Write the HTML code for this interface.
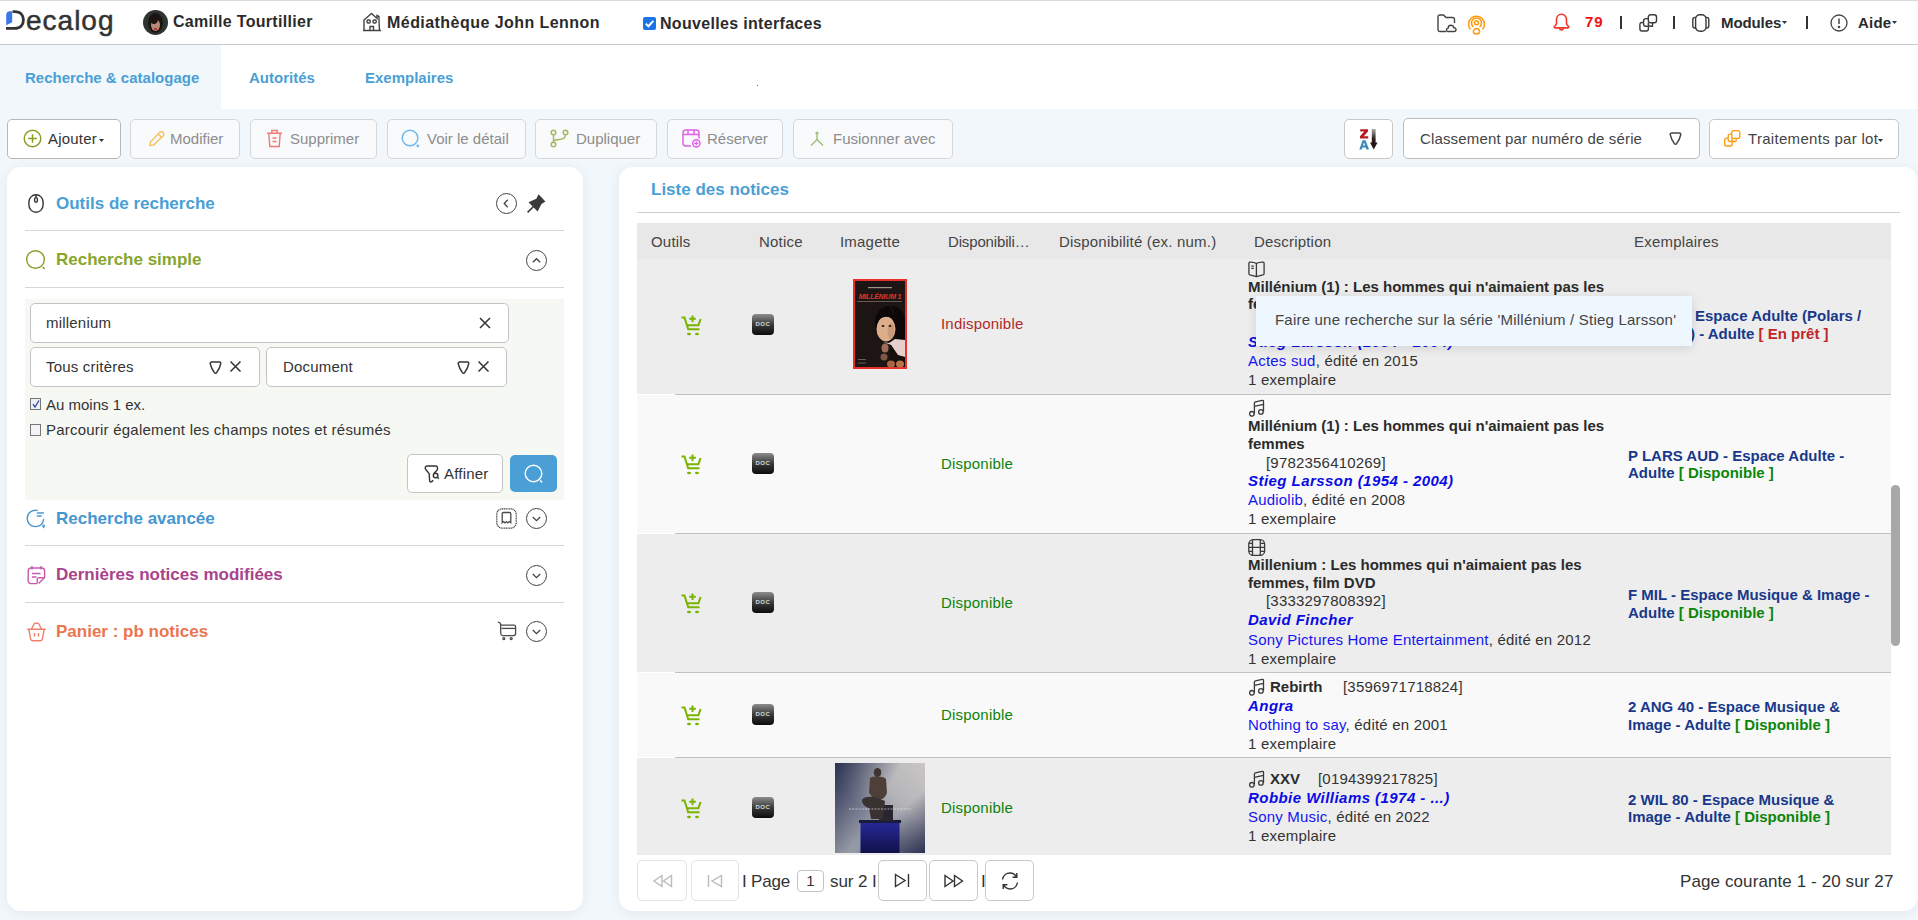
<!DOCTYPE html>
<html lang="fr">
<head>
<meta charset="utf-8">
<title>Decalog</title>
<style>
*{box-sizing:border-box;margin:0;padding:0}
html,body{width:1918px;height:920px;overflow:hidden}
body{position:relative;background:#f2f7fb;font-family:"Liberation Sans",sans-serif;color:#333;font-size:15px;line-height:1}
.a{position:absolute;white-space:nowrap;line-height:1}
svg{position:absolute;overflow:visible}
.b{font-weight:bold}
/* header */
#hdr{position:absolute;left:0;top:0;width:1918px;height:45px;background:#fff;border-top:1px solid #d9d9d9;border-bottom:1px solid #c9c9c9}
.hn{font-weight:bold;font-size:16px;color:#2b2b2b}
/* tabs */
#tabs{position:absolute;left:0;top:45px;width:1918px;height:64px;background:#fff}
#tabact{position:absolute;left:0;top:0;width:221px;height:64px;background:#f2f7fb}
.tab{font-weight:bold;font-size:15px;color:#4a9fd5}
/* toolbar */
.btn{position:absolute;top:119px;height:40px;border:1px solid #d4d7da;border-radius:5px;background:#f8fafc}
.btn.en{background:#fff;border-color:#b8b8b8}
.bt{position:absolute;font-size:15px;color:#8d8d8d;white-space:nowrap;line-height:1}
/* panels */
.panel{position:absolute;background:#fff;border-radius:14px;box-shadow:0 2px 12px rgba(40,70,100,.08)}
.sec{font-weight:bold;font-size:17px}
.hr{position:absolute;height:1px;background:#d7d7d7}
.circ{position:absolute;width:21px;height:21px;border:1.3px solid #444;border-radius:50%}
.th{position:absolute;top:234px;font-size:15px;color:#444;white-space:nowrap;line-height:1;letter-spacing:0.2px}
.row{position:absolute;left:0;width:1254px}
.sep{position:absolute;left:38px;width:1216px;height:1px;background:#c2c2c2}
.doc{position:absolute;width:22px;height:21px;border-radius:4px;background:linear-gradient(#8c8c8c,#3a3a3a 50%,#0c0c0c);color:#d8d8d8;font-size:6px;font-weight:bold;text-align:center;line-height:21px;letter-spacing:0.6px}
.dispo{position:absolute;font-size:15px;color:#0c840c;white-space:nowrap;line-height:1;letter-spacing:0.2px}
.tt{position:absolute;font-size:15px;font-weight:bold;color:#2b2b2b;white-space:nowrap;line-height:1}
.au{position:absolute;font-size:15px;font-weight:bold;font-style:italic;color:#0a0ae6;white-space:nowrap;line-height:1;letter-spacing:0.45px}
.pu{position:absolute;font-size:15px;color:#333;white-space:nowrap;line-height:1;letter-spacing:0.2px}
.lk{color:#1515f2}
.ex{position:absolute;font-size:15px;font-weight:bold;color:#18388a;white-space:nowrap;line-height:1}
.grn{color:#0b860b}
.red{color:#c0252a}
.pb{position:absolute;top:860px;height:41px;border:1px solid #c8c8c8;border-radius:5px;background:#fff}
</style>
</head>
<body>

<!-- ============ HEADER ============ -->
<div id="hdr"></div>
<!-- logo -->
<svg style="left:5px;top:10px" width="20" height="21" viewBox="0 0 20 21">
  <path d="M1.2 5 C1.2 2.8 2.6 1.2 4.6 1.2 L7.2 1.2 L7.2 12.2 L1.2 15.2 Z" fill="#3b78e7"/>
  <path d="M7.5 1.6 H9.8 C15.4 1.6 18.4 5.2 18.4 10 C18.4 14.8 15.4 18.4 9.8 18.4 H1" fill="none" stroke="#333" stroke-width="2.8"/>
</svg>
<div class="a" style="left:26px;top:7px;font-size:28px;color:#333;letter-spacing:1px;-webkit-text-stroke:0.5px #333">ecalog</div>

<!-- avatar -->
<div class="a" style="left:143px;top:10px;width:25px;height:25px;border-radius:50%;overflow:hidden;background:#2e3430">
  <div style="position:absolute;left:5px;top:3px;width:15px;height:20px;border-radius:50%;background:#1a1412"></div>
  <div style="position:absolute;left:8px;top:9px;width:9px;height:12px;border-radius:50%;background:#b88878"></div>
  <div style="position:absolute;left:7px;top:5px;width:8px;height:9px;border-radius:50%;background:#1a1412"></div>
  <div style="position:absolute;left:11px;top:18px;width:3px;height:1.5px;background:#c03040"></div>
</div>
<div class="a hn" style="left:173px;top:14px;letter-spacing:0.3px">Camille Tourtillier</div>

<!-- house -->
<svg style="left:362px;top:12px" width="20" height="20" viewBox="0 0 20 20" fill="none" stroke="#444" stroke-width="1.4">
  <path d="M1 18.5 H19 M2 18.5 V8 L9.5 1.5 L15 6.5 V3.5 L17 4.5 V9 L17.5 18.5"/>
  <rect x="5" y="8" width="3.2" height="3" rx="1"/><rect x="11" y="8" width="3.2" height="3" rx="1"/>
  <path d="M8 18.5 V14.5 H11.5 V18.5"/>
</svg>
<div class="a hn" style="left:387px;top:15px;letter-spacing:0.45px">Médiathèque John Lennon</div>

<!-- checkbox -->
<div class="a" style="left:643px;top:17px;width:13px;height:13px;border-radius:2px;background:#1a73e8"></div>
<svg style="left:643px;top:17px" width="13" height="13" viewBox="0 0 13 13"><path d="M2.8 6.7 L5.4 9.2 L10.3 3.8" fill="none" stroke="#fff" stroke-width="2"/></svg>
<div class="a hn" style="left:660px;top:16px;letter-spacing:0.32px">Nouvelles interfaces</div>

<!-- right header icons -->
<svg style="left:1437px;top:14px" width="20" height="19" viewBox="0 0 20 19" fill="none" stroke="#444" stroke-width="1.4">
  <path d="M9 17.5 H3 C1.8 17.5 1 16.7 1 15.5 V3 C1 1.8 1.8 1 3 1 H6.5 L9 3.5 H15.5 C16.7 3.5 17.5 4.3 17.5 5.5 V9"/>
  <path d="M10.5 17.5 H17 C18.3 17.5 19 16.6 19 15.6 C19 14.5 18 13.6 16.9 13.8 C16.5 12.2 15.3 11.3 14 11.3 C12.4 11.3 11.2 12.6 11.2 14 C10.2 14 9.5 14.8 9.5 15.8 C9.5 16.8 10.2 17.5 10.5 17.5 Z"/>
</svg>
<svg style="left:1467px;top:15px" width="19" height="20" viewBox="0 0 19 20" fill="none" stroke="#fb9a0e" stroke-width="1.5">
  <circle cx="9.5" cy="7.8" r="2"/>
  <path d="M6.4 11.8 A5 5 0 1 1 12.6 11.8"/>
  <path d="M3.6 14.6 A8 8 0 1 1 15.4 14.6"/>
  <path d="M9.5 13.4 C7.6 13.4 6.4 15 6.4 16.8 C6.4 18.4 7.8 19 9.5 19 C11.2 19 12.6 18.4 12.6 16.8 C12.6 15 11.4 13.4 9.5 13.4 Z"/>
</svg>
<svg style="left:1553px;top:13px" width="17" height="19" viewBox="0 0 17 19" fill="none" stroke="#f23a2c" stroke-width="1.6" stroke-linejoin="round">
  <path d="M8.5 1.2 C5.3 1.2 3.5 3.8 3.5 7 V10.4 C3.5 11.8 2.5 12.6 1.5 13.4 C0.9 13.9 1.2 14.9 2 14.9 H15 C15.8 14.9 16.1 13.9 15.5 13.4 C14.5 12.6 13.5 11.8 13.5 10.4 V7 C13.5 3.8 11.7 1.2 8.5 1.2 Z"/>
  <path d="M6.6 15.3 C6.9 17.4 10.1 17.4 10.4 15.3" stroke-linecap="round"/>
</svg>
<div class="a b" style="left:1585px;top:14px;font-size:15px;color:#ee1111;letter-spacing:0.8px">79</div>
<div class="a" style="left:1620px;top:16px;width:2px;height:13px;background:#333"></div>
<svg style="left:1639px;top:14px" width="19" height="18" viewBox="0 0 19 18" fill="none" stroke="#3a3a3a" stroke-width="1.4" stroke-linejoin="round">
  <rect x="9.3" y="0.8" width="8.2" height="8" rx="2.2"/>
  <path d="M9.3 4.6 H7 C5.4 4.6 4.6 5.5 4.6 7 V8.5 M9.3 8.8 V10 C9.3 11.4 10.2 12.2 11.6 12.2 H13.5 V8.8"/>
  <path d="M4.6 8.5 H3 C1.6 8.5 0.9 9.3 0.9 10.7 V14.8 C0.9 16.2 1.7 17 3 17 H7.2 C8.6 17 9.4 16.2 9.4 14.8 V12.2"/>
  <path d="M4.6 8.5 V10 C4.6 11.4 5.4 12.2 6.8 12.2 H9.4"/>
</svg>
<div class="a" style="left:1673px;top:16px;width:2px;height:13px;background:#333"></div>
<svg style="left:1692px;top:14px" width="19" height="18" viewBox="0 0 19 18" fill="none" stroke="#3a3a3a" stroke-width="1.4">
  <rect x="3.6" y="0.8" width="10.4" height="16.4" rx="4.2"/>
  <path d="M3.6 3.4 H2.9 C1.6 3.4 0.8 4.3 0.8 5.6 V11.8 C0.8 13.1 1.6 14 2.9 14 H3.6"/>
  <path d="M14 3.4 H14.7 C16 3.4 16.8 4.3 16.8 5.6 V11.8 C16.8 13.1 16 14 14.7 14 H14"/>
</svg>
<div class="a hn" style="left:1721px;top:15px;font-size:15px;letter-spacing:-0.1px">Modules</div>
<svg style="left:1782px;top:21px" width="5" height="3" viewBox="0 0 5 3"><path d="M0 0 H5 L2.5 3 Z" fill="#333"/></svg>
<div class="a" style="left:1806px;top:16px;width:2px;height:13px;background:#333"></div>
<svg style="left:1830px;top:14px" width="18" height="18" viewBox="0 0 18 18" fill="none" stroke="#444" stroke-width="1.3">
  <circle cx="9" cy="9" r="8"/>
  <path d="M9 4.5 V10" stroke-width="1.5"/><circle cx="9" cy="13" r=".6" fill="#444"/>
</svg>
<div class="a hn" style="left:1858px;top:15px;font-size:15px;letter-spacing:0.2px">Aide</div>
<svg style="left:1892px;top:21px" width="5" height="3" viewBox="0 0 5 3"><path d="M0 0 H5 L2.5 3 Z" fill="#333"/></svg>

<!-- ============ TABS ============ -->
<div id="tabs"><div id="tabact"></div></div>
<div class="a tab" style="left:25px;top:70px">Recherche &amp; catalogage</div>
<div class="a tab" style="left:249px;top:70px">Autorités</div>
<div class="a tab" style="left:365px;top:70px">Exemplaires</div>
<div class="a" style="left:757px;top:85px;width:1px;height:1px;background:#e33"></div>

<!-- ============ TOOLBAR ============ -->
<div class="btn en" style="left:7px;width:114px"></div>
<svg style="left:23px;top:129px" width="19" height="19" viewBox="0 0 19 19" fill="none" stroke="#8a9a1e" stroke-width="1.4">
  <circle cx="9.5" cy="9.5" r="8.3"/><path d="M9.5 5.2 V13.8 M5.2 9.5 H13.8"/>
</svg>
<div class="bt" style="left:48px;top:131px;color:#333;letter-spacing:0.2px">Ajouter</div>
<svg style="left:99px;top:139px" width="5" height="3" viewBox="0 0 5 3"><path d="M0 0 H5 L2.5 3 Z" fill="#333"/></svg>

<div class="btn" style="left:130px;width:110px"></div>
<svg style="left:148px;top:130px" width="17" height="17" viewBox="0 0 17 17" fill="none" stroke="#f5c25a" stroke-width="1.4">
  <path d="M2 15.5 L2.4 12 L11.5 2.6 C12.6 1.5 14.3 1.5 15.2 2.5 C16.1 3.4 16 5 15 6 L5.7 15 Z"/><path d="M10.3 4 L13.8 7.4"/>
</svg>
<div class="bt" style="left:170px;top:131px">Modifier</div>

<div class="btn" style="left:250px;width:127px"></div>
<svg style="left:266px;top:129px" width="17" height="19" viewBox="0 0 17 19" fill="none" stroke="#f07b73" stroke-width="1.4">
  <path d="M1 4.2 H16 M5.8 4 V1.5 H11.2 V4 M2.8 4.5 L3.8 17.5 H13.2 L14.2 4.5 M6.5 9 H10.5 M6.5 12.5 H10.5"/>
</svg>
<div class="bt" style="left:290px;top:131px">Supprimer</div>

<div class="btn" style="left:387px;width:139px"></div>
<svg style="left:401px;top:129px" width="20" height="20" viewBox="0 0 20 20" fill="none" stroke="#6fb9f0" stroke-width="1.5">
  <circle cx="9" cy="9" r="7.8"/><circle cx="16.8" cy="16.8" r="1.4" fill="#6fb9f0" stroke="none"/>
</svg>
<div class="bt" style="left:427px;top:131px">Voir le détail</div>

<div class="btn" style="left:535px;width:122px"></div>
<svg style="left:550px;top:129px" width="19" height="19" viewBox="0 0 19 19" fill="none" stroke="#a8b760" stroke-width="1.5">
  <circle cx="3.5" cy="3.5" r="2.3"/><circle cx="3.5" cy="15.5" r="2.3"/><circle cx="15.5" cy="3.5" r="2.3"/>
  <path d="M3.5 5.8 V13.2 M15.5 5.8 C15.5 9.5 13 10.5 9 10.5 C6 10.5 3.5 11 3.5 13.2"/>
</svg>
<div class="bt" style="left:576px;top:131px">Dupliquer</div>

<div class="btn" style="left:667px;width:116px"></div>
<svg style="left:682px;top:129px" width="19" height="19" viewBox="0 0 19 19" fill="none" stroke="#e060e8" stroke-width="1.5">
  <path d="M9 17 H4 C2.3 17 1 15.7 1 14 V4 C1 2.3 2.3 1 4 1 H14 C15.7 1 17 2.3 17 4 V9.5"/>
  <path d="M1 5.5 H17 M6 1 V5.5 M12 1 V5.5"/>
  <circle cx="14.3" cy="14.3" r="3.6"/><path d="M14.3 12.3 V16.3 M12.3 14.3 H16.3" stroke-width="1.2"/>
</svg>
<div class="bt" style="left:707px;top:131px">Réserver</div>

<div class="btn" style="left:793px;width:160px"></div>
<svg style="left:809px;top:130px" width="16" height="17" viewBox="0 0 16 17" fill="none" stroke="#9cc070" stroke-width="1.4">
  <path d="M8 2 V9.5 L2 15.5 M8 9.5 L14 15.5"/><path d="M5.6 3.8 L8 1.2 L10.4 3.8 Z" fill="#9cc070" stroke="none"/>
</svg>
<div class="bt" style="left:833px;top:131px">Fusionner avec</div>

<!-- right toolbar -->
<div class="btn en" style="left:1344px;width:49px;border-color:#c8c8c8"></div>
<svg style="left:1359px;top:128px" width="21" height="23" viewBox="0 0 21 23">
  <defs><linearGradient id="shaft" x1="0" y1="0" x2="0" y2="1"><stop offset="0" stop-color="#aaa"/><stop offset="0.7" stop-color="#2a1a1a"/></linearGradient></defs>
  <path d="M1.2 1.2 H9 V3.4 L4.8 8.2 H9.2 V10.4 H1 V8.2 L5.2 3.4 H1.2 Z" fill="#b81c22"/>
  <path d="M3.6 12.2 H6.6 L10 21.5 H7.3 L6.7 19.6 H3.4 L2.8 21.5 H0.3 Z M4 17.6 H6.1 L5.05 14.2 Z" fill="#3b8ab8"/>
  <rect x="12.8" y="1" width="3.8" height="14.5" fill="url(#shaft)"/>
  <path d="M11 14.6 H18.6 L14.7 21.6 Z" fill="#221414"/>
</svg>
<div class="btn en" style="left:1403px;top:118px;width:297px;height:41px;border-color:#bdbdbd"></div>
<div class="bt" style="left:1420px;top:131px;color:#444;letter-spacing:0.15px">Classement par numéro de série</div>
<svg style="left:1669px;top:132px" width="13" height="14" viewBox="0 0 13 14" fill="none" stroke="#444" stroke-width="1.5">
  <path d="M1.3 2.8 C1 1.7 1.7 1 2.8 1 H10.2 C11.3 1 12 1.7 11.7 2.8 C11.1 5.6 9.2 9.4 7.6 11.6 C7.1 12.4 5.9 12.4 5.4 11.6 C3.8 9.4 1.9 5.6 1.3 2.8 Z"/>
</svg>

<div class="btn en" style="left:1709px;width:190px;border-color:#c8c8c8"></div>
<svg style="left:1724px;top:130px" width="17" height="17" viewBox="0 0 17 17" fill="none" stroke="#fb9a0e" stroke-width="1.3" stroke-linejoin="round">
  <rect x="7.8" y="0.6" width="8" height="7.8" rx="2"/>
  <path d="M7.8 4.2 H6.2 C4.9 4.2 4.2 4.9 4.2 6.2 V8.2 M7.8 8.4 C7.8 9.8 8.5 11.5 9.8 11.5 H11.2 C11.9 11.5 12.2 11 12.2 10.2 V8.4"/>
  <path d="M4.2 8.2 H2.6 C1.3 8.2 0.6 8.9 0.6 10.2 V14 C0.6 15.3 1.3 16 2.6 16 H6.2 C7.5 16 8.2 15.3 8.2 14 V11.5"/>
  <path d="M4.2 8.2 V9.5 C4.2 10.8 4.9 11.5 6.2 11.5 H8.2"/>
</svg>
<div class="bt" style="left:1748px;top:131px;color:#444;letter-spacing:0.3px">Traitements par lot</div>
<svg style="left:1878px;top:139px" width="5" height="3" viewBox="0 0 5 3"><path d="M0 0 H5 L2.5 3 Z" fill="#333"/></svg>

<!-- ============ LEFT PANEL ============ -->
<div class="panel" style="left:7px;top:167px;width:576px;height:744px"></div>
<svg style="left:28px;top:194px" width="16" height="19" viewBox="0 0 16 19" fill="none" stroke="#333" stroke-width="1.4">
  <rect x="0.9" y="0.8" width="14.2" height="17.4" rx="7.1"/><rect x="6.6" y="3.6" width="2.8" height="4.6" rx="1.4"/><path d="M8 0.8 V3.6"/>
</svg>
<div class="a sec" style="left:56px;top:195px;color:#4a9fd5">Outils de recherche</div>
<div class="circ" style="left:496px;top:193px"></div>
<svg style="left:496px;top:193px" width="21" height="21" viewBox="0 0 21 21" fill="none" stroke="#444" stroke-width="1.3"><path d="M11.8 6.8 L8.2 10.5 L11.8 14.2"/></svg>
<svg style="left:527px;top:194px" width="19" height="19" viewBox="0 0 19 19">
  <path d="M0.6 18.4 L6.4 12.6" stroke="#3a3a3a" stroke-width="1.5"/>
  <path d="M11.6 0.2 L18.4 7.4 L14.5 10 L10.6 17.5 L1.5 8.3 L9.3 4.8 Z" fill="#3a3a3a"/>
</svg>
<div class="hr" style="left:25px;top:230px;width:539px"></div>

<svg style="left:26px;top:250px" width="21" height="21" viewBox="0 0 21 21" fill="none" stroke="#8c9a26" stroke-width="1.4">
  <circle cx="9.5" cy="9.5" r="8.8"/><path d="M16.6 17 L18.6 19"/>
</svg>
<div class="a sec" style="left:56px;top:251px;color:#88a62e">Recherche simple</div>
<div class="circ" style="left:526px;top:250px"></div>
<svg style="left:526px;top:250px" width="21" height="21" viewBox="0 0 21 21" fill="none" stroke="#444" stroke-width="1.3"><path d="M6.8 12.3 L10.5 8.7 L14.2 12.3"/></svg>
<div class="hr" style="left:25px;top:287px;width:539px"></div>

<!-- search box -->
<div class="a" style="left:25px;top:299px;width:539px;height:201px;background:#f6f9f3"></div>
<div class="a" style="left:30px;top:303px;width:479px;height:40px;background:#fff;border:1px solid #c4c4c4;border-radius:5px"></div>
<div class="a" style="left:46px;top:315px;font-size:15px;color:#333;letter-spacing:0.2px">millenium</div>
<svg style="left:479px;top:317px" width="12" height="12" viewBox="0 0 12 12" stroke="#333" stroke-width="1.5"><path d="M1 1 L11 11 M11 1 L1 11"/></svg>

<div class="a" style="left:30px;top:347px;width:230px;height:40px;background:#fff;border:1px solid #c4c4c4;border-radius:5px"></div>
<div class="a" style="left:46px;top:359px;font-size:15px;color:#333;letter-spacing:0.2px">Tous critères</div>
<svg style="left:209px;top:361px" width="13" height="14" viewBox="0 0 13 14" fill="none" stroke="#333" stroke-width="1.5"><path d="M1.3 2.8 C1 1.7 1.7 1 2.8 1 H10.2 C11.3 1 12 1.7 11.7 2.8 C11.1 5.6 9.2 9.4 7.6 11.6 C7.1 12.4 5.9 12.4 5.4 11.6 C3.8 9.4 1.9 5.6 1.3 2.8 Z"/></svg>
<svg style="left:230px;top:361px" width="11" height="11" viewBox="0 0 11 11" stroke="#333" stroke-width="1.5"><path d="M.5 .5 L10.5 10.5 M10.5 .5 L.5 10.5"/></svg>

<div class="a" style="left:266px;top:347px;width:241px;height:40px;background:#fff;border:1px solid #c4c4c4;border-radius:5px"></div>
<div class="a" style="left:283px;top:359px;font-size:15px;color:#333;letter-spacing:0.2px">Document</div>
<svg style="left:457px;top:361px" width="13" height="14" viewBox="0 0 13 14" fill="none" stroke="#333" stroke-width="1.5"><path d="M1.3 2.8 C1 1.7 1.7 1 2.8 1 H10.2 C11.3 1 12 1.7 11.7 2.8 C11.1 5.6 9.2 9.4 7.6 11.6 C7.1 12.4 5.9 12.4 5.4 11.6 C3.8 9.4 1.9 5.6 1.3 2.8 Z"/></svg>
<svg style="left:478px;top:361px" width="11" height="11" viewBox="0 0 11 11" stroke="#333" stroke-width="1.5"><path d="M.5 .5 L10.5 10.5 M10.5 .5 L.5 10.5"/></svg>

<div class="a" style="left:30px;top:398px;width:11px;height:12px;border:1px solid #777;background:#eef0f6"></div>
<svg style="left:31px;top:399px" width="10" height="10" viewBox="0 0 10 10"><path d="M2 5.2 L4 8 L8 1.5" fill="none" stroke="#3848a8" stroke-width="1.4"/></svg>
<div class="a" style="left:46px;top:397px;font-size:15px;color:#333">Au moins 1 ex.</div>
<div class="a" style="left:30px;top:424px;width:11px;height:12px;border:1px solid #777;background:#f4f4f4"></div>
<div class="a" style="left:46px;top:422px;font-size:15px;color:#333;letter-spacing:0.22px">Parcourir également les champs notes et résumés</div>

<div class="a" style="left:407px;top:454px;width:96px;height:39px;background:#fff;border:1px solid #c4c4c4;border-radius:5px"></div>
<svg style="left:424px;top:465px" width="19" height="19" viewBox="0 0 19 19" fill="none" stroke="#333" stroke-width="1.4" stroke-linejoin="round">
  <path d="M10 8.2 L12.8 5.6 C14 4.4 13.8 1 12 1 H3 C1.2 1 0.7 3.2 1.8 4.5 L5.2 8.6 L5.6 15.6 C5.7 16.8 6.6 17.3 7.6 16.6 L9.3 15.4"/>
  <circle cx="11.6" cy="10.5" r="2.3"/><path d="M13.3 12.3 L14.8 13.8"/>
</svg>
<div class="a" style="left:444px;top:466px;font-size:15px;color:#333;letter-spacing:0.2px">Affiner</div>
<div class="a" style="left:510px;top:455px;width:47px;height:37px;background:#4aa0d6;border-radius:5px"></div>
<svg style="left:524px;top:464px" width="21" height="21" viewBox="0 0 21 21" fill="none" stroke="#fff" stroke-width="1.4">
  <circle cx="9.5" cy="9.5" r="8.3"/><path d="M16 16.3 L18.2 18.5"/>
</svg>

<!-- other sections -->
<svg style="left:26px;top:509px" width="20" height="19" viewBox="0 0 20 19" fill="none" stroke="#4596d0" stroke-width="1.4" stroke-linecap="round">
  <path d="M17.6 10.5 C17.2 14.8 13.6 17.6 9.4 17.6 C4.8 17.6 1.2 14 1.2 9.4 C1.2 4.8 4.8 1.2 9.4 1.2 C10 1.2 10.6 1.3 11.2 1.4"/>
  <path d="M11.4 4 H17.4 M11.4 7 H15.2"/>
  <path d="M18.4 16.8 C18.4 17.8 17.6 18.6 17.6 18.6 C17.6 18.6 16.8 17.8 16.8 16.8 C16.8 16.3 17.2 16 17.6 16 C18 16 18.4 16.3 18.4 16.8 Z" stroke-width="1.1"/>
</svg>
<div class="a sec" style="left:56px;top:510px;color:#4596d0">Recherche avancée</div>
<svg style="left:496px;top:508px" width="21" height="21" viewBox="0 0 21 21" fill="none" stroke="#4a4a4a" stroke-width="1.2">
  <rect x="0.8" y="0.8" width="19.4" height="19.4" rx="5.5" stroke-dasharray="1.2 0.5"/>
  <path d="M6.2 5.8 C6.2 5 6.7 4.5 7.5 4.5 H13.5 C14.3 4.5 14.8 5 14.8 5.8 V14.8 L13.2 13.6 L11.8 14.9 L10.4 13.6 L9 14.9 L7.6 13.6 L6.2 14.8 Z" stroke-width="1.3"/>
</svg>
<div class="circ" style="left:526px;top:508px"></div>
<svg style="left:526px;top:508px" width="21" height="21" viewBox="0 0 21 21" fill="none" stroke="#444" stroke-width="1.3"><path d="M6.8 9 L10.5 12.6 L14.2 9"/></svg>
<div class="hr" style="left:25px;top:545px;width:539px"></div>

<svg style="left:27px;top:565px" width="19" height="20" viewBox="0 0 19 20" fill="none" stroke="#c55ab0" stroke-width="1.4">
  <path d="M10 18.6 H4 C2.3 18.6 1.2 17.4 1.2 15.8 V6 C1.2 4.3 2.4 3 4 3 H14.8 C16.5 3 17.6 4.3 17.6 6 V12.5 L11.6 18.6"/>
  <path d="M5 1 V4.5 M14 1 V4.5 M5 8.5 H13.5 M5 12 H9.5 M10.2 18.5 V14.8 C10.2 13.6 11 12.8 12.2 12.8 H17.5"/>
</svg>
<div class="a sec" style="left:56px;top:566px;color:#a8438c">Dernières notices modifiées</div>
<div class="circ" style="left:526px;top:565px"></div>
<svg style="left:526px;top:565px" width="21" height="21" viewBox="0 0 21 21" fill="none" stroke="#444" stroke-width="1.3"><path d="M6.8 9 L10.5 12.6 L14.2 9"/></svg>
<div class="hr" style="left:25px;top:602px;width:539px"></div>

<svg style="left:26px;top:622px" width="21" height="20" viewBox="0 0 21 20" fill="none" stroke="#f0806a" stroke-width="1.4">
  <path d="M1.2 7.2 H19.8 M2.8 7.2 L4.6 16.8 C4.8 18 5.8 18.8 7 18.8 H14 C15.2 18.8 16.2 18 16.4 16.8 L18.2 7.2"/>
  <path d="M5.5 7 L8.5 1.2 M15.5 7 L12.5 1.2 M8.5 1.2 H12.5 M8.5 11 V14.5 M12.5 11 V14.5"/>
</svg>
<div class="a sec" style="left:56px;top:623px;color:#e9764f">Panier : pb notices</div>
<svg style="left:497px;top:621px" width="20" height="20" viewBox="0 0 20 20" fill="none" stroke="#4a4a4a" stroke-width="1.3" stroke-linejoin="round">
  <path d="M0.8 1.2 C2 1.2 3 1.6 3.4 2.6 L3.8 4.2"/>
  <path d="M3.6 4.2 H17 C18 4.2 18.6 4.8 18.6 5.8 V12.6 C18.6 13.8 17.8 14.6 16.6 14.6 H5.6 C4.6 14.6 3.9 13.9 3.8 12.8 Z"/>
  <path d="M4.6 7.4 H18.4"/>
  <circle cx="6.8" cy="17.6" r="1"/><circle cx="14.2" cy="17.6" r="1"/>
</svg>
<div class="circ" style="left:526px;top:621px"></div>
<svg style="left:526px;top:621px" width="21" height="21" viewBox="0 0 21 21" fill="none" stroke="#444" stroke-width="1.3"><path d="M6.8 9 L10.5 12.6 L14.2 9"/></svg>

<!-- ============ RIGHT PANEL ============ -->
<div class="panel" style="left:619px;top:167px;width:1299px;height:744px"></div>
<div class="a sec" style="left:651px;top:181px;color:#4a9fd5">Liste des notices</div>
<div class="hr" style="left:637px;top:212px;width:1263px;height:1px;background:#cdcdcd"></div>

<!-- table header -->
<div class="a" style="left:637px;top:223px;width:1254px;height:36px;background:#e8e8e8"></div>
<div class="th" style="left:651px">Outils</div>
<div class="th" style="left:759px">Notice</div>
<div class="th" style="left:840px">Imagette</div>
<div class="th" style="left:948px;letter-spacing:-0.15px">Disponibili…</div>
<div class="th" style="left:1059px">Disponibilité (ex. num.)</div>
<div class="th" style="left:1254px">Description</div>
<div class="th" style="left:1634px">Exemplaires</div>

<!-- table body -->
<div id="tb" style="position:absolute;left:637px;top:259px;width:1254px;height:596px;overflow:hidden">
  <div class="row" style="top:0;height:135px;background:#ededed"></div>
  <div class="sep" style="top:135px"></div>
  <div class="row" style="top:136px;height:138px;background:#f9f9f9"></div>
  <div class="sep" style="top:274px"></div>
  <div class="row" style="top:275px;height:138px;background:#ededed"></div>
  <div class="sep" style="top:413px"></div>
  <div class="row" style="top:414px;height:84px;background:#f9f9f9"></div>
  <div class="sep" style="top:498px"></div>
  <div class="row" style="top:499px;height:110px;background:#ededed"></div>
</div>
<div class="a" style="left:1891px;top:485px;width:9px;height:161px;border-radius:5px;background:#a8a8a8"></div>

<!-- ===== ROW 1 ===== -->
<svg class="cart" style="left:681px;top:315px" width="20" height="20" viewBox="0 0 20 20"><use href="#cartp"/></svg>
<div class="doc" style="left:752px;top:314px">DOC</div>
<svg style="left:853px;top:279px" width="54" height="90" viewBox="0 0 54 90">
  <rect width="54" height="90" fill="#e8302a"/>
  <rect x="2" y="2" width="50" height="86" fill="#1d1513"/>
  <rect x="15" y="8" width="24" height="1.2" fill="#a0948e"/>
  <text x="27" y="19.6" text-anchor="middle" font-family="Liberation Sans" font-weight="bold" font-style="italic" font-size="7" fill="#e0352a" letter-spacing="-0.2">MILLÉNIUM 1</text>
  <rect x="4" y="22" width="45" height="0.8" fill="#7a6e68"/>
  <path d="M22 46 C21 34 28 27 37 27 C46 27 52 33 52 42 V68 H40 L26 60 Z" fill="#0c0807"/>
  <path d="M37 27 C40 30 41 34 40 38" stroke="#3a2a24" stroke-width="0.6" fill="none"/>
  <ellipse cx="33" cy="50" rx="9.5" ry="12.5" fill="#dcae8c"/>
  <path d="M23.5 44 C25 36 31 34 38 35 C42 36 44 39 44 42 C42 38 36 37 31 38 C27 39 24 42 23.5 44 Z" fill="#0c0807"/>
  <ellipse cx="38" cy="52" rx="3.5" ry="8" fill="#b88468" opacity="0.5"/>
  <ellipse cx="30" cy="47" rx="1.4" ry="0.9" fill="#2a1a14"/><ellipse cx="37" cy="47" rx="1.4" ry="0.9" fill="#2a1a14"/>
  <path d="M30 63 L36 64 L42 60 L52 61 V78 L45 76 L38 66 Z" fill="#e6cfcc"/>
  <path d="M38 66 L45 77 L52 78 V88 H36 Z" fill="#140e0c"/>
  <ellipse cx="32" cy="69" rx="3.5" ry="4.5" fill="#a06c5a"/>
  <ellipse cx="31" cy="78" rx="3.5" ry="3.5" fill="#7e5648"/>
  <ellipse cx="38" cy="85" rx="4" ry="3.5" fill="#a86648"/>
  <ellipse cx="47" cy="85" rx="4" ry="3.5" fill="#b87450"/>
  <rect x="5" y="80" width="8" height="1" fill="#6a605a"/><rect x="5" y="83.5" width="8" height="1" fill="#6a605a"/>
</svg>
<div class="dispo" style="left:941px;top:316px;color:#b02a2a">Indisponible</div>

<svg style="left:1248px;top:261px" width="18" height="17" viewBox="0 0 18 17" fill="none" stroke="#3a3a3a" stroke-width="1.3" stroke-linejoin="round">
  <path d="M8.4 2.6 C7 1.5 4.6 1 1.9 1.1 Q0.9 1.2 0.9 2.3 V12.4 Q0.9 13.4 1.9 13.8 L8.4 15.7 L14.9 13.8 Q16.1 13.4 16.1 12.4 V2.3 Q16.1 1.2 15.1 1.1 C12.4 1 9.8 1.5 8.4 2.6 Z M8.4 2.6 V15.7"/>
  <path d="M3.3 5.1 H5.8 M3.3 7.4 H5.8" stroke-width="1.4"/>
</svg>
<div class="tt" style="left:1248px;top:279px">Millénium (1) : Les hommes qui n'aimaient pas les</div>
<div class="tt" style="left:1248px;top:296px">femmes</div>
<div class="au" style="left:1248px;top:334px">Stieg Larsson (1954 - 2004)</div>
<div class="pu" style="left:1248px;top:353px"><span class="lk">Actes sud</span>, édité en 2015</div>
<div class="pu" style="left:1248px;top:372px">1 exemplaire</div>
<div class="ex" style="left:1695px;top:308px">Espace Adulte (Polars /</div>
<div class="ex" style="left:1690px;top:326px">) - Adulte <span class="red">[ En prêt ]</span></div>

<!-- ===== ROW 2 ===== -->
<svg class="cart" style="left:681px;top:454px" width="20" height="20" viewBox="0 0 20 20"><use href="#cartp"/></svg>
<div class="doc" style="left:752px;top:453px">DOC</div>
<div class="dispo" style="left:941px;top:456px">Disponible</div>
<svg style="left:1249px;top:400px" width="16" height="17" viewBox="0 0 16 17" fill="none" stroke="#3a3a3a" stroke-width="1.3"><use href="#music"/></svg>
<div class="tt" style="left:1248px;top:418px">Millénium (1) : Les hommes qui n'aimaient pas les</div>
<div class="tt" style="left:1248px;top:436px">femmes</div>
<div class="pu" style="left:1266px;top:455px">[9782356410269]</div>
<div class="au" style="left:1248px;top:473px">Stieg Larsson (1954 - 2004)</div>
<div class="pu" style="left:1248px;top:492px"><span class="lk">Audiolib</span>, édité en 2008</div>
<div class="pu" style="left:1248px;top:511px">1 exemplaire</div>
<div class="ex" style="left:1628px;top:448px">P LARS AUD - Espace Adulte -</div>
<div class="ex" style="left:1628px;top:465px">Adulte <span class="grn">[ Disponible ]</span></div>

<!-- ===== ROW 3 ===== -->
<svg class="cart" style="left:681px;top:593px" width="20" height="20" viewBox="0 0 20 20"><use href="#cartp"/></svg>
<div class="doc" style="left:752px;top:592px">DOC</div>
<div class="dispo" style="left:941px;top:595px">Disponible</div>
<svg style="left:1248px;top:539px" width="17" height="17" viewBox="0 0 17 17" fill="none" stroke="#3a3a3a" stroke-width="1.3">
  <rect x="0.8" y="0.6" width="15.8" height="15.8" rx="4.5"/><path d="M4.5 0.6 V16.4 M12.3 0.6 V16.4 M0.8 8.4 H16.6 M0.8 4.4 H4.5 M12.3 4.4 H16.6 M0.8 12.3 H4.5 M12.3 12.3 H16.6"/>
</svg>
<div class="tt" style="left:1248px;top:557px">Millenium : Les hommes qui n'aimaient pas les</div>
<div class="tt" style="left:1248px;top:575px">femmes, film DVD</div>
<div class="pu" style="left:1266px;top:593px">[3333297808392]</div>
<div class="au" style="left:1248px;top:612px">David Fincher</div>
<div class="pu" style="left:1248px;top:632px"><span class="lk">Sony Pictures Home Entertainment</span>, édité en 2012</div>
<div class="pu" style="left:1248px;top:651px">1 exemplaire</div>
<div class="ex" style="left:1628px;top:587px">F MIL - Espace Musique &amp; Image -</div>
<div class="ex" style="left:1628px;top:605px">Adulte <span class="grn">[ Disponible ]</span></div>

<!-- ===== ROW 4 ===== -->
<svg class="cart" style="left:681px;top:705px" width="20" height="20" viewBox="0 0 20 20"><use href="#cartp"/></svg>
<div class="doc" style="left:752px;top:704px">DOC</div>
<div class="dispo" style="left:941px;top:707px">Disponible</div>
<svg style="left:1249px;top:679px" width="16" height="17" viewBox="0 0 16 17" fill="none" stroke="#3a3a3a" stroke-width="1.3"><use href="#music"/></svg>
<div class="tt" style="left:1270px;top:679px">Rebirth</div>
<div class="pu" style="left:1343px;top:679px">[3596971718824]</div>
<div class="au" style="left:1248px;top:698px">Angra</div>
<div class="pu" style="left:1248px;top:717px"><span class="lk">Nothing to say</span>, édité en 2001</div>
<div class="pu" style="left:1248px;top:736px">1 exemplaire</div>
<div class="ex" style="left:1628px;top:699px">2 ANG 40 - Espace Musique &amp;</div>
<div class="ex" style="left:1628px;top:717px">Image - Adulte <span class="grn">[ Disponible ]</span></div>

<!-- ===== ROW 5 ===== -->
<svg class="cart" style="left:681px;top:798px" width="20" height="20" viewBox="0 0 20 20"><use href="#cartp"/></svg>
<div class="doc" style="left:752px;top:797px">DOC</div>
<svg style="left:835px;top:763px" width="90" height="90" viewBox="0 0 90 90">
  <defs>
    <linearGradient id="rwbg" x1="1" y1="0" x2="0" y2="1">
      <stop offset="0" stop-color="#c9c6c4"/><stop offset="0.35" stop-color="#b4b4b8"/><stop offset="0.6" stop-color="#8a90a0"/><stop offset="1" stop-color="#9a9ea8"/>
    </linearGradient>
    <linearGradient id="rwl" x1="0" y1="0" x2="1" y2="0.6">
      <stop offset="0" stop-color="#2a3050" stop-opacity="1"/><stop offset="0.55" stop-color="#2a3050" stop-opacity="0"/>
    </linearGradient>
    <linearGradient id="rwr" x1="1" y1="1" x2="0.3" y2="0.2">
      <stop offset="0" stop-color="#2c3250" stop-opacity="1"/><stop offset="0.5" stop-color="#2c3250" stop-opacity="0"/>
    </linearGradient>
    <linearGradient id="rwp" x1="0" y1="0" x2="0" y2="1">
      <stop offset="0" stop-color="#26289a"/><stop offset="1" stop-color="#11124a"/>
    </linearGradient>
  </defs>
  <rect width="90" height="90" fill="url(#rwbg)"/>
  <rect width="90" height="90" fill="url(#rwl)"/>
  <rect width="90" height="90" fill="url(#rwr)"/>
  <rect x="25.5" y="59" width="39" height="31" fill="url(#rwp)"/>
  <rect x="24" y="57" width="42" height="3" fill="#1a1c3a"/>
  <rect x="44" y="42" width="14" height="16" fill="#2a2630"/>
  <ellipse cx="42.5" cy="9.5" rx="3.8" ry="4.5" fill="#3e3430"/>
  <path d="M35 15 C38 13 48 13 51 16 L52 30 C50 35 46 38 40 37 L34 30 Z" fill="#4e4038"/>
  <path d="M27 37 C28 34 34 33 40 34 L50 38 L48 56 L36 56 L34 45 C30 44 27 41 27 37 Z" fill="#3a3230"/>
  <path d="M14 46 H76" stroke="#f0f0f0" stroke-width="0.9" stroke-dasharray="2 1.2" opacity="0.7"/>
</svg>
<div class="dispo" style="left:941px;top:800px">Disponible</div>
<svg style="left:1249px;top:771px" width="16" height="17" viewBox="0 0 16 17" fill="none" stroke="#3a3a3a" stroke-width="1.3"><use href="#music"/></svg>
<div class="tt" style="left:1270px;top:771px">XXV</div>
<div class="pu" style="left:1318px;top:771px">[0194399217825]</div>
<div class="au" style="left:1248px;top:790px">Robbie Williams (1974 - ...)</div>
<div class="pu" style="left:1248px;top:809px"><span class="lk">Sony Music</span>, édité en 2022</div>
<div class="pu" style="left:1248px;top:828px">1 exemplaire</div>
<div class="ex" style="left:1628px;top:792px">2 WIL 80 - Espace Musique &amp;</div>
<div class="ex" style="left:1628px;top:809px">Image - Adulte <span class="grn">[ Disponible ]</span></div>

<!-- tooltip -->
<div class="a" style="left:1256px;top:296px;width:436px;height:50px;background:#eef6fe;box-shadow:0 2px 10px rgba(0,0,0,.12)"></div>
<div class="pu" style="left:1275px;top:312px;color:#444;letter-spacing:0.2px">Faire une recherche sur la série 'Millénium / Stieg Larsson'</div>

<!-- pagination -->
<div class="pb" style="left:637px;width:50px;height:41px;border-color:#e3e3e3"></div>
<svg style="left:652px;top:874px" width="22" height="14" viewBox="0 0 22 14" fill="none" stroke="#bbb" stroke-width="1.4">
  <path d="M10 1.5 L2 7 L10 12.5 Z M19.5 1.5 L11.5 7 L19.5 12.5 Z"/>
</svg>
<div class="pb" style="left:691px;width:48px;border-color:#e3e3e3"></div>
<svg style="left:707px;top:874px" width="16" height="14" viewBox="0 0 16 14" fill="none" stroke="#bbb" stroke-width="1.4">
  <path d="M1.5 1 V13 M14.5 1.5 L5 7 L14.5 12.5 Z"/>
</svg>
<div class="a" style="left:742px;top:873px;font-size:17px;color:#333;letter-spacing:-0.2px">I Page</div>
<div class="a" style="left:797px;top:870px;width:27px;height:22px;border:1px solid #c4c4c4;border-radius:4px;background:#fff;font-size:15px;color:#333;text-align:center;line-height:20px">1</div>
<div class="a" style="left:830px;top:873px;font-size:17px;color:#333;letter-spacing:-0.1px">sur 2 I</div>
<div class="pb" style="left:878px;width:49px"></div>
<svg style="left:894px;top:873px" width="16" height="15" viewBox="0 0 16 15" fill="none" stroke="#333" stroke-width="1.4">
  <path d="M1.5 1.5 L11 7.5 L1.5 13.5 Z M14.5 1 V14"/>
</svg>
<div class="pb" style="left:929px;width:49px"></div>
<svg style="left:943px;top:874px" width="22" height="14" viewBox="0 0 22 14" fill="none" stroke="#333" stroke-width="1.4">
  <path d="M2 1.5 L10 7 L2 12.5 Z M11.5 1.5 L19.5 7 L11.5 12.5 Z"/>
</svg>
<div class="a" style="left:981px;top:873px;font-size:17px;color:#333">I</div>
<div class="pb" style="left:985px;width:49px"></div>
<svg style="left:999px;top:870px" width="22" height="22" viewBox="0 0 22 22" fill="none" stroke="#333" stroke-width="1.4">
  <path d="M3.5 9.5 C4.2 5.5 7.4 3 11 3 C13.8 3 16 4.5 17.5 6.8 M17.8 3 V7.2 H13.6"/>
  <path d="M18.5 12.5 C17.8 16.5 14.6 19 11 19 C8.2 19 6 17.5 4.5 15.2 M4.2 19 V14.8 H8.4"/>
</svg>
<div class="a" style="left:1680px;top:873px;font-size:17px;color:#333;letter-spacing:0.1px">Page courante 1 - 20 sur 27</div>

<svg width="0" height="0" style="position:absolute">
  <defs>
    <g id="cartp">
      <path d="M0.5 2.5 H3.5 L7.2 14.2 H18.6" fill="none" stroke="#78b400" stroke-width="2"/>
      <path d="M6 10.2 H17.4 L19.6 4" fill="none" stroke="#78b400" stroke-width="2"/>
      <path d="M11.5 0.5 V7 M8.2 3.8 H14.8" fill="none" stroke="#78b400" stroke-width="2"/>
      <ellipse cx="8" cy="19" rx="2" ry="1.3" fill="#78b400"/><ellipse cx="16" cy="19" rx="2" ry="1.3" fill="#78b400"/>
    </g>
    <g id="music">
      <path d="M5.4 13.5 V3 C5.4 2.4 5.8 2 6.4 1.8 L13.2 0.4 C14 0.3 14.5 0.7 14.5 1.4 V11.5 M5.4 6.3 L14.5 4.3"/>
      <circle cx="2.9" cy="13.8" r="2.3"/><circle cx="11.9" cy="11.9" r="2.3"/>
    </g>
  </defs>
</svg>

</body>
</html>
